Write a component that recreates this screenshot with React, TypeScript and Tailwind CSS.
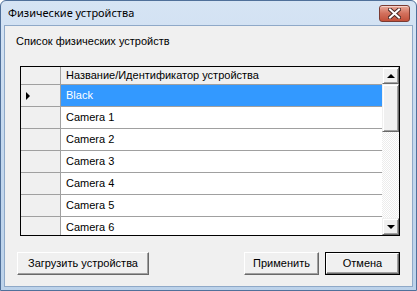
import React from "react";

const rows = ["Black", "Camera 1", "Camera 2", "Camera 3", "Camera 4", "Camera 5", "Camera 6"];

function ClassicButton({ label, width, isDefault }: { label: string; width: string; isDefault?: boolean }) {
  const face = (
    <div className="flex h-full w-full items-center justify-center border border-t-white border-l-white border-r-[#696969] border-b-[#696969] bg-[#f0f0f0] shadow-[inset_-1px_-1px_0_#a0a0a0]">
      {label}
    </div>
  );
  if (isDefault) {
    return <div className={`${width} h-[23px] border border-black`}>{face}</div>;
  }
  return <div className={`${width} h-[23px]`}>{face}</div>;
}

function ScrollButton({ up }: { up?: boolean }) {
  return (
    <div className="flex h-[17px] shrink-0 items-center justify-center border border-t-[#f0f0f0] border-l-[#f0f0f0] border-r-[#696969] border-b-[#696969] bg-[#f0f0f0] shadow-[inset_1px_1px_0_#fff,inset_-1px_-1px_0_#a0a0a0]">
      {up ? (
        <div className="h-0 w-0 border-x-[4px] border-x-transparent border-b-[4px] border-b-black" />
      ) : (
        <div className="h-0 w-0 border-x-[4px] border-x-transparent border-t-[4px] border-t-black" />
      )}
    </div>
  );
}

export default function App() {
  return (
    <div className="h-[291px] w-[417px] bg-white font-['Liberation_Sans',Arial,sans-serif] text-[11px] leading-[13px] text-black">
      <div className="flex h-full w-full flex-col rounded-t-[6px] border border-[#50709a] bg-gradient-to-b from-[#d6e4f4] via-[#c4d8ee] to-[#bcd2ea]">
        {/* Title bar */}
        <div className="flex h-[24px] shrink-0 items-center justify-between pl-[7px] pr-[6px]">
          <span className="font-['Noto_Sans',sans-serif] text-[11px] leading-[16px] text-black">Физические устройства</span>
          <div className="flex h-[17px] w-[31px] items-center justify-center rounded-[3px] border border-[#7a3b32] bg-gradient-to-b from-[#e9a99a] via-[#d2705c] to-[#c2503a] shadow-[inset_0_1px_0_rgba(255,255,255,0.5)]">
            <svg width="13" height="11" viewBox="0 0 13 11">
              <path d="M2 1.5 L11 9.5 M11 1.5 L2 9.5" stroke="#4a2a26" strokeWidth="4" strokeLinecap="square" />
              <path d="M2 1.5 L11 9.5 M11 1.5 L2 9.5" stroke="#ffffff" strokeWidth="2" strokeLinecap="square" />
            </svg>
          </div>
        </div>

        {/* Client area */}
        <div className="mx-[3px] mb-[3px] flex flex-1 flex-col border border-[#8fa9c8] bg-[#f0f0f0]">
          <div className="pl-[11px] pt-[9px]">Список физических устройств</div>

          {/* Grid */}
          <div className="ml-[15px] mr-[12px] mt-[18px] flex h-[170px] border border-black bg-white">
            <div className="flex flex-1 flex-col overflow-hidden">
              <div className="flex h-[18px] shrink-0 border-b border-[#a0a0a0] bg-[#f0f0f0]">
                <div className="w-[40px] shrink-0 border-r border-[#a0a0a0]" />
                <div className="flex flex-1 items-center pl-[5px]">Название/Идентификатор устройства</div>
              </div>
              {rows.map((name, i) => (
                <div key={name} className="flex h-[22px] shrink-0 border-b border-[#a0a0a0]">
                  <div className="flex w-[40px] shrink-0 items-center border-r border-[#a0a0a0] bg-[#f0f0f0] pl-[5px]">
                    {i === 0 && <div className="h-0 w-0 border-y-[4px] border-y-transparent border-l-[4px] border-l-black" />}
                  </div>
                  <div className={`flex flex-1 items-center pl-[5px] ${i === 0 ? "bg-[#3399ff] text-white" : ""}`}>{name}</div>
                </div>
              ))}
            </div>

            {/* Scrollbar */}
            <div className="flex w-[17px] shrink-0 flex-col">
              <ScrollButton up />
              <div className="h-[48px] shrink-0 border border-t-[#f0f0f0] border-l-[#f0f0f0] border-r-[#696969] border-b-[#696969] bg-[#f0f0f0] shadow-[inset_1px_1px_0_#fff,inset_-1px_-1px_0_#a0a0a0]" />
              <div className="flex-1 bg-[repeating-conic-gradient(#ffffff_0_25%,#ececec_0_50%)] bg-[length:2px_2px]" />
              <ScrollButton />
            </div>
          </div>

          {/* Buttons */}
          <div className="mt-[16px] flex items-center px-[12px]">
            <ClassicButton label="Загрузить устройства" width="w-[132px]" />
            <div className="flex-1" />
            <ClassicButton label="Применить" width="w-[75px]" />
            <div className="w-[6px]" />
            <ClassicButton label="Отмена" width="w-[75px]" isDefault />
          </div>
        </div>
      </div>
    </div>
  );
}
